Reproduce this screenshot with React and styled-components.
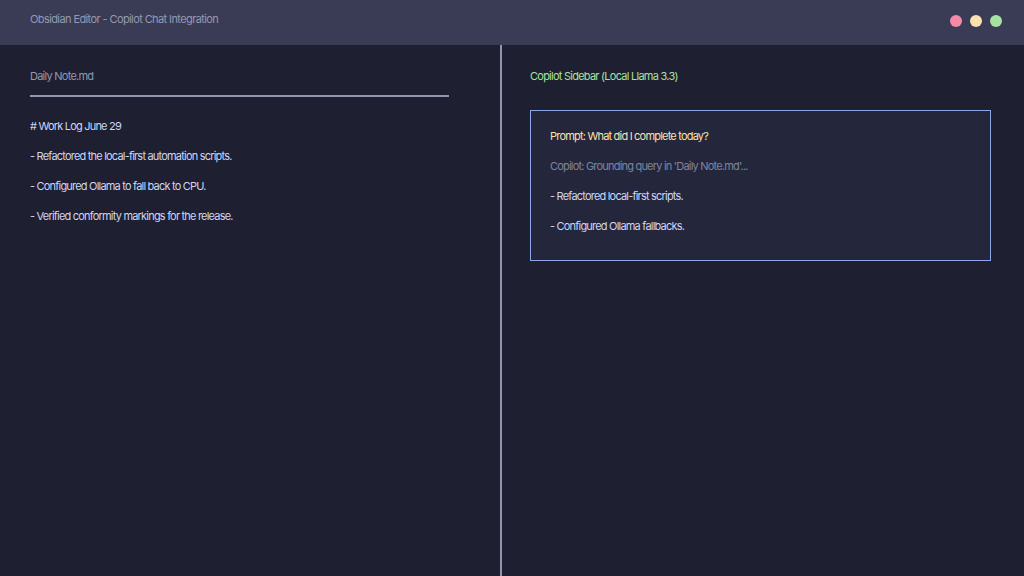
import React from "react";
import styled, { createGlobalStyle } from "styled-components";

const Global = createGlobalStyle`
  html, body { margin: 0; padding: 0; background: #1e1f30; }
  body { font-family: Inter, "Noto Sans", sans-serif; -webkit-font-smoothing: antialiased; }
  * { box-sizing: border-box; }
`;

const Frame = styled.div`
  width: 1024px;
  height: 576px;
  display: flex;
  flex-direction: column;
  background: #1e1f30;
  overflow: hidden;
`;

const TitleBar = styled.header`
  height: 45px;
  flex: none;
  display: flex;
  align-items: center;
  justify-content: space-between;
  padding: 0 22px 0 30px;
  background: #3a3c55;
`;

const WindowTitle = styled.span`
  font-size: 11px;
  letter-spacing: -0.6px;
  color: #9399b2;
  margin-top: -8px;
`;

const Dots = styled.div`
  display: flex;
  gap: 8px;
  margin-top: -3px;
`;

const Dot = styled.span`
  width: 12px;
  height: 12px;
  border-radius: 50%;
  background: ${(p) => p.$color};
`;

const Body = styled.main`
  flex: 1;
  display: flex;
`;

const EditorPane = styled.section`
  width: 502px;
  flex: none;
  padding: 24px 51px 0 30px;
  border-right: 2px solid #9096b0;
`;

const SidebarPane = styled.section`
  flex: 1;
  padding: 24px 33px 0 28px;
`;

const FileName = styled.div`
  font-size: 11px;
  line-height: 14px;
  letter-spacing: -0.75px;
  color: #9399b2;
  padding-bottom: 12px;
  border-bottom: 2px solid #9096b0;
`;

const PaneTitle = styled.div`
  font-size: 11px;
  line-height: 14px;
  letter-spacing: -0.75px;
  color: #a6e3a1;
`;

const Lines = styled.div`
  display: flex;
  flex-direction: column;
  gap: 16px;
  margin-top: ${(p) => p.$top || 0}px;
`;

const Line = styled.p`
  margin: 0;
  font-size: 11px;
  line-height: 14px;
  letter-spacing: -0.8px;
  color: ${(p) => p.$color || "#cdd6f4"};
  white-space: nowrap;
`;

const ChatBox = styled.div`
  margin-top: 27px;
  height: 151px;
  border: 1px solid #8ea5e8;
  background: #24273c;
  padding: 18px 19px;
`;

export default function App() {
  return (
    <>
      <Global />
      <Frame>
        <TitleBar>
          <WindowTitle>Obsidian Editor - Copilot Chat Integration</WindowTitle>
          <Dots>
            <Dot $color="#f38ba8" />
            <Dot $color="#f9e2af" />
            <Dot $color="#a6e3a1" />
          </Dots>
        </TitleBar>
        <Body>
          <EditorPane>
            <FileName>Daily Note.md</FileName>
            <Lines $top={22}>
              <Line># Work Log June 29</Line>
              <Line>- Refactored the local-first automation scripts.</Line>
              <Line>- Configured Ollama to fall back to CPU.</Line>
              <Line>- Verified conformity markings for the release.</Line>
            </Lines>
          </EditorPane>
          <SidebarPane>
            <PaneTitle>Copilot Sidebar (Local Llama 3.3)</PaneTitle>
            <ChatBox>
              <Lines>
                <Line $color="#f9e2af">Prompt: What did I complete today?</Line>
                <Line $color="#7f849c">Copilot: Grounding query in 'Daily Note.md'...</Line>
                <Line>- Refactored local-first scripts.</Line>
                <Line>- Configured Ollama fallbacks.</Line>
              </Lines>
            </ChatBox>
          </SidebarPane>
        </Body>
      </Frame>
    </>
  );
}
